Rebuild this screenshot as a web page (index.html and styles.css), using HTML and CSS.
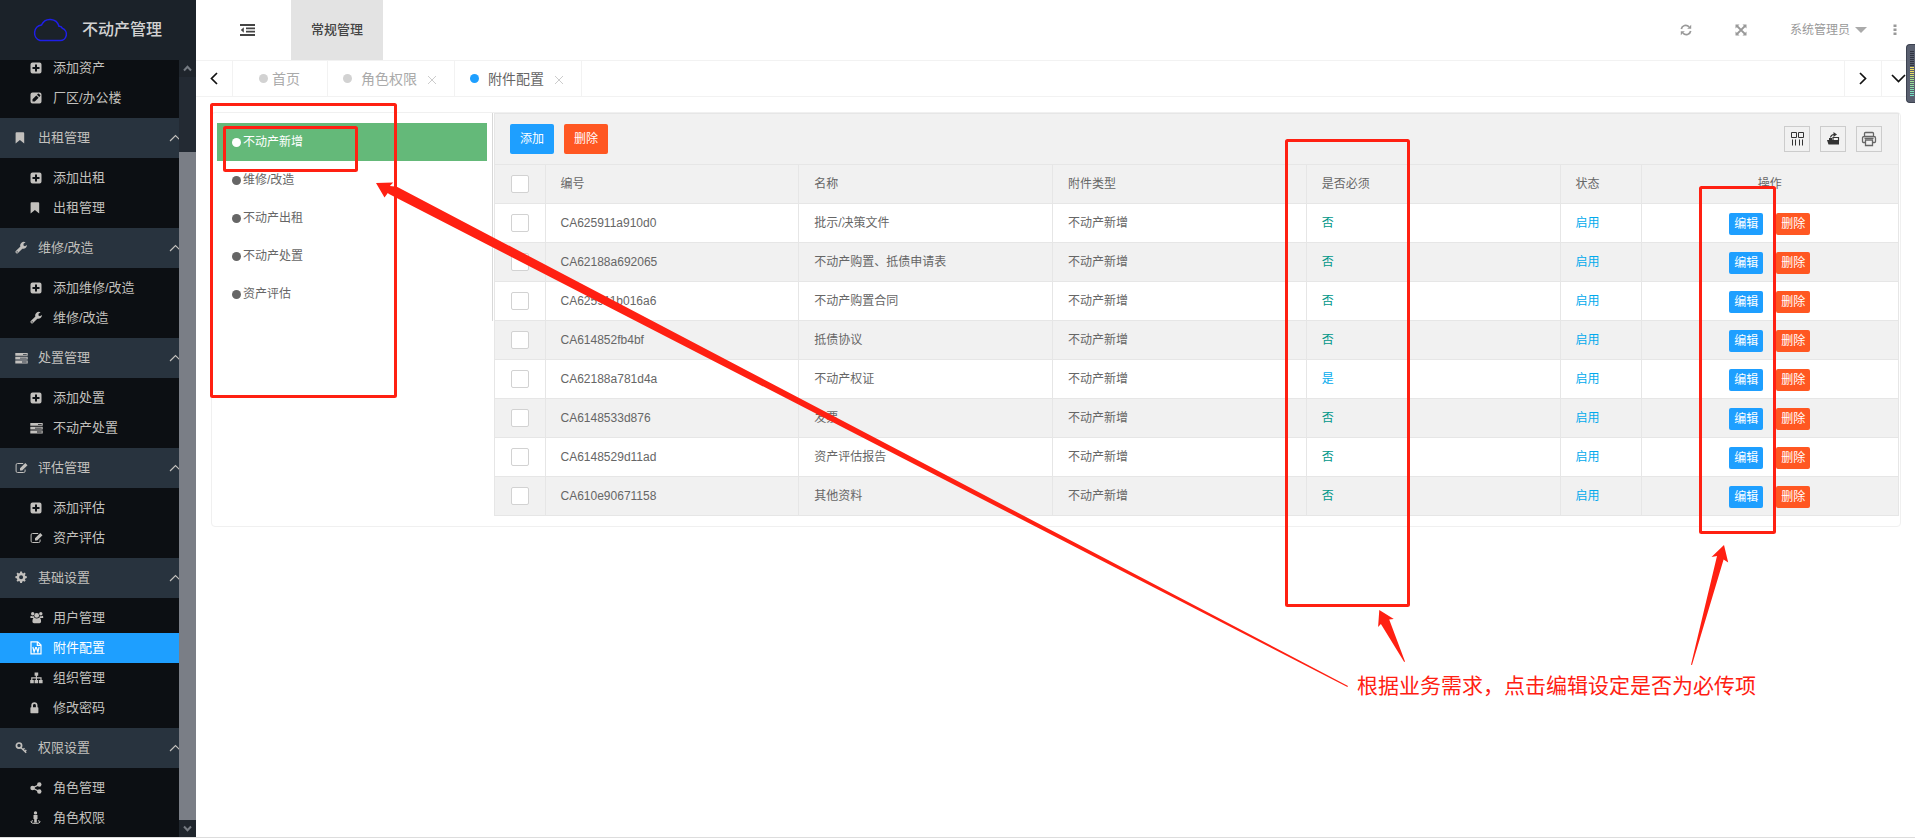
FILE: index.html
```html
<!DOCTYPE html>
<html lang="zh-CN">
<head>
<meta charset="utf-8">
<title>不动产管理</title>
<link rel="stylesheet" href="styles.css">
</head>
<body>
<svg class="sprite" aria-hidden="true">
  <symbol id="plus" viewBox="0 0 14 14"><path fill-rule="evenodd" d="M2.500 1.500h7a2 2 0 0 1 2 2v7a2 2 0 0 1-2 2h-7a2 2 0 0 1-2-2v-7a2 2 0 0 1 2-2zM5 3.500V6H2.500v2H5v2.500h2V8h2.500V6H7V3.500z"/></symbol>
  <symbol id="pencil" viewBox="0 0 14 14"><path fill-rule="evenodd" d="M2.500 1.500h7a2 2 0 0 1 2 2v7a2 2 0 0 1-2 2h-7a2 2 0 0 1-2-2v-7a2 2 0 0 1 2-2zM2.500 8.200v2.300h2.300L8.600 6.700 6.300 4.400zM7 3.700 9.300 6l.9-.9a.7.7 0 0 0 0-1L8.900 2.800a.7.7 0 0 0-1 0z"/></symbol>
  <symbol id="bookmark" viewBox="0 0 14 14"><path d="M1.500 1.300h6.800q.9 0 .9.900v10.400L4.900 8.900.6 12.600V2.200q0-.9.900-.9z"/></symbol>
  <symbol id="wrench" viewBox="0 0 14 14"><path fill-rule="evenodd" d="M7.300 7.700 3 12.100a1.300 1.300 0 0 1-1.900 0l-.3-.4a1.300 1.300 0 0 1 0-1.800l4.600-4.300A3.600 3.600 0 0 1 10.600 1.300L8.500 2.700v1.700l1.400.8 2-1.200A3.600 3.600 0 0 1 7.300 7.700zM2.100 10.300a.6.6 0 1 0 .1 1.200.6.6 0 0 0-.1-1.200z"/></symbol>
  <symbol id="server" viewBox="0 0 14 14"><path fill-rule="evenodd" d="M.3 2h12.400v2.800H.3zM8 3v.8h3.700V3zM.3 5.800h12.400v2.800H.3zM5 6.800v.8h6.700v-.8zM.3 9.600h12.400v2.800H.3zM7 10.600v.8h4.700v-.8z"/></symbol>
  <symbol id="edit" viewBox="0 0 14 14"><path d="M8.200 2.500H2.500a1.400 1.400 0 0 0-1.400 1.400v6.200a1.400 1.400 0 0 0 1.400 1.400h6.200a1.400 1.400 0 0 0 1.400-1.400V8.500" fill="none" stroke="currentColor"/><path d="M5 7.300 10.300 2 12.500 4.200 7.200 9.500H5z"/></symbol>
  <symbol id="gear" viewBox="0 0 14 14"><path fill-rule="evenodd" d="m4.900 2 .3-1.400h1.800L7.300 2l1 .4 1.200-.8 1.200 1.200-.8 1.300.4 1 1.500.2v1.800l-1.500.3-.4 1 .8 1.200-1.200 1.200-1.200-.8-1 .4L7 11.900H5.200l-.3-1.500-1-.4-1.200.8L1.500 9.600l.8-1.200-.4-1L.4 7.100V5.300l1.500-.2.4-1-.8-1.300 1.200-1.200 1.200.8zM6.100 4.200a2 2 0 1 0 0 4 2 2 0 0 0 0-4z"/></symbol>
  <symbol id="users" viewBox="0 0 14 14"><circle cx="2.700" cy="2.800" r="1.700"/><circle cx="10.800" cy="2.800" r="1.700"/><circle cx="6.700" cy="4.400" r="2.400"/><path d="M.4 7V5.800Q.4 4.700 1.500 4.900q1.200.6 2.200.1.200 1.200 1 2zM13.200 7V5.800q0-1.100-1.100-.9-1.200.6-2.200.1-.2 1.200-1 2zM2.400 10.400q0-3.400 2-3.700 2.300 1.600 4.700 0 2 .3 2 3.700 0 1.800-1.600 1.800H4q-1.600 0-1.600-1.800z"/></symbol>
  <symbol id="word" viewBox="0 0 14 14"><path d="M1 .8h6.700l3.300 3.300v8.700H1zM7.300.8v3.600H11" fill="none" stroke="currentColor" stroke-width="1.200"/><path d="m2.900 6 1.200 5 1.600-4.400h.7L7.900 11l1.200-5" fill="none" stroke="currentColor" stroke-width="1.200"/></symbol>
  <symbol id="sitemap" viewBox="0 0 14 14"><path d="M4.600 1.500h3.600v3.300H7v1.500h4.600V9h1v3.200H9V9h1.400V7.400H7V9h1.200v3.200H4.600V9h1.200V7.400H2.400V9h1.400v3.200H.2V9h1V6.300h4.600V4.800H4.600z"/></symbol>
  <symbol id="lock" viewBox="0 0 14 14"><path fill-rule="evenodd" d="M1.300 6.300V4.400a3.100 3.100 0 0 1 6.200 0v1.900h.3q.6 0 .6.700v4.600q0 .7-.6.700H1q-.6 0-.6-.7V7q0-.7.6-.7zM3 6.300h2.900V4.400a1.450 1.450 0 0 0-2.900 0z"/></symbol>
  <symbol id="key" viewBox="0 0 14 14"><circle cx="4" cy="4.600" r="2.600" fill="none" stroke="currentColor" stroke-width="1.700"/><path d="m5.800 6.400 5.400 5.400M8 8.700l1.500-1.500M9.800 10.500 11.300 9" fill="none" stroke="currentColor" stroke-width="1.400"/></symbol>
  <symbol id="share" viewBox="0 0 14 14"><circle cx="2.600" cy="7" r="2.300"/><circle cx="9.300" cy="3.500" r="2.200"/><circle cx="9.300" cy="10.500" r="2.200"/><path d="M9.300 3.500 2.600 7l6.700 3.500" fill="none" stroke="currentColor" stroke-width="1.400"/></symbol>
  <symbol id="person" viewBox="0 0 14 14"><circle cx="5.500" cy="1.900" r="1.700"/><path d="M3.500 4h4v4h-.7v3.700H4.200V8h-.7z"/><path d="M3 9.700Q.8 10 .8 11q.6 1.500 4.700 1.500t4.700-1.500q0-1-2.200-1.300" fill="none" stroke="currentColor"/></symbol>
  <symbol id="up" viewBox="0 0 14 8"><path d="m1 7 5.500-5.500L12 7" fill="none" stroke="currentColor" stroke-width="1.200"/></symbol>
  <symbol id="cross" viewBox="0 0 10 10"><path d="m1 1 8 8M9 1 1 9" fill="none" stroke="currentColor"/></symbol>
</svg>

<div class="app">
  <aside class="sidebar">
    <div class="brand">
      <svg class="cloud" viewBox="0 0 37 25"><path d="M9 22.500h20a6.300 6.300 0 0 0 2.300-12.200Q30.500 8 28 8.300A9.300 9.300 0 0 0 10.500 7 8 8 0 0 0 9 22.500z" fill="none" stroke="#1f1fe8" stroke-width="1.500"/></svg>
      <h1>不动产管理</h1>
    </div>
    <div class="side-body">
      <nav class="menu">
        <ul class="sub sub-scrolled">
          <li><a href="#"><svg><use href="#plus"/></svg>添加资产</a></li>
          <li><a href="#"><svg><use href="#pencil"/></svg>厂区/办公楼</a></li>
        </ul>
        <button class="group"><svg><use href="#bookmark"/></svg>出租管理<svg class="chev"><use href="#up"/></svg></button>
        <ul class="sub">
          <li><a href="#"><svg><use href="#plus"/></svg>添加出租</a></li>
          <li><a href="#"><svg><use href="#bookmark"/></svg>出租管理</a></li>
        </ul>
        <button class="group"><svg><use href="#wrench"/></svg>维修/改造<svg class="chev"><use href="#up"/></svg></button>
        <ul class="sub">
          <li><a href="#"><svg><use href="#plus"/></svg>添加维修/改造</a></li>
          <li><a href="#"><svg><use href="#wrench"/></svg>维修/改造</a></li>
        </ul>
        <button class="group"><svg><use href="#server"/></svg>处置管理<svg class="chev"><use href="#up"/></svg></button>
        <ul class="sub">
          <li><a href="#"><svg><use href="#plus"/></svg>添加处置</a></li>
          <li><a href="#"><svg><use href="#server"/></svg>不动产处置</a></li>
        </ul>
        <button class="group"><svg><use href="#edit"/></svg>评估管理<svg class="chev"><use href="#up"/></svg></button>
        <ul class="sub">
          <li><a href="#"><svg><use href="#plus"/></svg>添加评估</a></li>
          <li><a href="#"><svg><use href="#edit"/></svg>资产评估</a></li>
        </ul>
        <button class="group"><svg><use href="#gear"/></svg>基础设置<svg class="chev"><use href="#up"/></svg></button>
        <ul class="sub">
          <li><a href="#"><svg><use href="#users"/></svg>用户管理</a></li>
          <li><a href="#" class="active"><svg><use href="#word"/></svg>附件配置</a></li>
          <li><a href="#"><svg><use href="#sitemap"/></svg>组织管理</a></li>
          <li><a href="#"><svg><use href="#lock"/></svg>修改密码</a></li>
        </ul>
        <button class="group"><svg><use href="#key"/></svg>权限设置<svg class="chev"><use href="#up"/></svg></button>
        <ul class="sub">
          <li><a href="#"><svg><use href="#share"/></svg>角色管理</a></li>
          <li><a href="#"><svg><use href="#person"/></svg>角色权限</a></li>
        </ul>
      </nav>
      <div class="scroll">
        <span class="scroll-btn"><svg viewBox="0 0 9 7"><path d="m1 5.500 3.500-3.700L8 5.500" /></svg></span>
        <span class="scroll-track"></span>
        <span class="scroll-thumb"></span>
        <span class="scroll-btn"><svg viewBox="0 0 9 7"><path d="m1 1.500 3.500 3.700L8 1.500" /></svg></span>
      </div>
    </div>
  </aside>

  <div class="page">
    <header class="topbar">
      <button class="fold" aria-label="折叠菜单"><svg viewBox="0 0 15 12"><path d="M0 1h15M6 4.300h9M6 7.600h9M0 11h15" fill="none" stroke="currentColor" stroke-width="1.800"/><path d="M3.800 3.300v5.400L.8 6z"/></svg></button>
      <a href="#" class="module">常规管理</a>
      <div class="tools">
        <button aria-label="刷新"><svg viewBox="0 0 12 12"><path d="M1.300 5A4.500 4.500 0 0 1 9 2.800M10.700 7A4.500 4.500 0 0 1 3 9.200" fill="none" stroke="currentColor" stroke-width="1.700"/><path d="M11.200.8v4h-4zM.8 11.200v-4h4z"/></svg></button>
        <button aria-label="全屏"><svg viewBox="0 0 12 12"><path d="M.5.500h4L.5 4.500zM11.500.500v4l-4-4zM.5 11.500v-4l4 4zM11.500 11.500h-4l4-4z"/><path d="m2 2 8 8M10 2l-8 8" stroke="currentColor" stroke-width="1.800"/></svg></button>
        <button class="user">系统管理员<span class="caret"></span></button>
        <button class="more" aria-label="更多"><svg viewBox="0 0 4 12"><path d="M.5.500h3v2.500h-3zM.5 4.500h3V7h-3zM.5 8.500h3V11h-3z"/></svg></button>
      </div>
    </header>

    <div class="tabs">
      <button class="step" aria-label="向左"><svg viewBox="0 0 8 13"><path d="M7 1 1.500 6.500 7 12"/></svg></button>
      <a href="#" class="tab home"><i></i>首页</a>
      <a href="#" class="tab"><i></i>角色权限<svg><use href="#cross"/></svg></a>
      <a href="#" class="tab current"><i></i>附件配置<svg><use href="#cross"/></svg></a>
      <span class="fill"></span>
      <button class="step" aria-label="向右"><svg viewBox="0 0 8 13"><path d="M1 1l5.500 5.500L1 12"/></svg></button>
      <button class="step last" aria-label="展开"><svg class="wide" viewBox="0 0 15 9"><path d="m1 1 6.500 6.500L14 1"/></svg></button>
    </div>

    <main class="card">
      <ul class="types">
        <li><a href="#" class="on"><i></i>不动产新增</a></li>
        <li><a href="#"><i></i>维修/改造</a></li>
        <li><a href="#"><i></i>不动产出租</a></li>
        <li><a href="#"><i></i>不动产处置</a></li>
        <li><a href="#"><i></i>资产评估</a></li>
      </ul>
      <section class="grid">
        <div class="bar">
          <button class="btn blue">添加</button>
          <button class="btn red">删除</button>
          <div class="bar-tools">
            <button aria-label="筛选列"><svg viewBox="0 0 16 16"><path d="M2.500 1.500h5v5h-5zM9.500 1.500h5v5h-5zM3.500 8.500v6M6.500 8.500v6M10.500 8.500v6M13.500 8.500v6" fill="none" stroke="#333"/></svg></button>
            <button aria-label="导出"><svg viewBox="0 0 16 16"><path d="M2 9h12v4.500H3.500zM4 7h3v2H4z" fill="#333"/><path d="M5.500 6.500Q6 3.500 9 3.500M8 10V6.500h5.500V10" fill="none" stroke="#333" stroke-width="1.200"/><path d="M8.500 1v5L12 3.500z" fill="#333"/></svg></button>
            <button aria-label="打印"><svg viewBox="0 0 16 16"><path d="M3.500 5.500v-3q0-1 1-1h7q1 0 1 1v3M4 11.500H2.500q-1 0-1-1V7q0-1.500 1.500-1.500h10q1.500 0 1.500 1.500v3.500q0 1-1 1H12M4.500 9h7v5.500h-7zM3.500 7.300h9" fill="none" stroke="#666" stroke-width="1.300"/></svg></button>
          </div>
        </div>
        <table>
          <colgroup><col class="c-check"><col><col><col><col><col class="c-state"><col class="c-ops"></colgroup>
          <thead><tr><th><input type="checkbox" aria-label="全选"></th><th>编号</th><th>名称</th><th>附件类型</th><th>是否必须</th><th>状态</th><th class="ops">操作</th></tr></thead>
          <tbody>
            <tr><td><input type="checkbox" aria-label="选择"></td><td>CA625911a910d0</td><td>批示/决策文件</td><td>不动产新增</td><td class="no">否</td><td class="yes">启用</td><td class="ops"><div><button class="mini blue">编辑</button><button class="mini red">删除</button></div></td></tr>
            <tr><td><input type="checkbox" aria-label="选择"></td><td>CA62188a692065</td><td>不动产购置、抵债申请表</td><td>不动产新增</td><td class="no">否</td><td class="yes">启用</td><td class="ops"><div><button class="mini blue">编辑</button><button class="mini red">删除</button></div></td></tr>
            <tr><td><input type="checkbox" aria-label="选择"></td><td>CA625911b016a6</td><td>不动产购置合同</td><td>不动产新增</td><td class="no">否</td><td class="yes">启用</td><td class="ops"><div><button class="mini blue">编辑</button><button class="mini red">删除</button></div></td></tr>
            <tr><td><input type="checkbox" aria-label="选择"></td><td>CA614852fb4bf</td><td>抵债协议</td><td>不动产新增</td><td class="no">否</td><td class="yes">启用</td><td class="ops"><div><button class="mini blue">编辑</button><button class="mini red">删除</button></div></td></tr>
            <tr><td><input type="checkbox" aria-label="选择"></td><td>CA62188a781d4a</td><td>不动产权证</td><td>不动产新增</td><td class="yes">是</td><td class="yes">启用</td><td class="ops"><div><button class="mini blue">编辑</button><button class="mini red">删除</button></div></td></tr>
            <tr><td><input type="checkbox" aria-label="选择"></td><td>CA6148533d876</td><td>发票</td><td>不动产新增</td><td class="no">否</td><td class="yes">启用</td><td class="ops"><div><button class="mini blue">编辑</button><button class="mini red">删除</button></div></td></tr>
            <tr><td><input type="checkbox" aria-label="选择"></td><td>CA6148529d11ad</td><td>资产评估报告</td><td>不动产新增</td><td class="no">否</td><td class="yes">启用</td><td class="ops"><div><button class="mini blue">编辑</button><button class="mini red">删除</button></div></td></tr>
            <tr><td><input type="checkbox" aria-label="选择"></td><td>CA610e90671158</td><td>其他资料</td><td>不动产新增</td><td class="no">否</td><td class="yes">启用</td><td class="ops"><div><button class="mini blue">编辑</button><button class="mini red">删除</button></div></td></tr>
          </tbody>
        </table>
      </section>
    </main>
  </div>
</div>

<div class="meter"></div>

<svg class="marks" aria-hidden="true">
  <g class="frames">
    <rect x="211.500" y="104.500" width="184" height="292" rx="1"/>
    <rect x="224.500" y="127.500" width="132" height="43" rx="1"/>
    <rect x="1286.500" y="140.500" width="122" height="465" rx="1"/>
    <rect x="1700.500" y="187.500" width="74" height="345" rx="1"/>
  </g>
  <path d="M376 183l17.200-.6-3.300 3.600 7 .8L1348 686l-.6 1L389 194l-1.200-1-3.300 4.500zM1379.300 610l14.500 9-4.600.6 15.800 42-.8.400-23.300-38-2.800 3zM1724 545l4.200 17.500-4.600-3L1692 665l-1-.3L1717 556l-5.500 1z"/>
</svg>
<p class="note">根据业务需求，点击编辑设定是否为必传项</p>
</body>
</html>
```
FILE: styles.css
```css
* { box-sizing: border-box; }
body {
  margin: 0;
  font: 12px/20px "Liberation Sans", "Noto Sans CJK SC", sans-serif;
  color: #666;
  background: #fff;
}
button { font: inherit; color: inherit; background: none; border: 0; padding: 0; margin: 0; cursor: pointer; }
a { color: inherit; text-decoration: none; }
ul { list-style: none; margin: 0; padding: 0; }
svg { fill: currentColor; flex: none; }
.sprite { position: absolute; width: 0; height: 0; }

.app { display: flex; height: 100vh; border-bottom: 1px solid #ddd; overflow: hidden; }

/* sidebar */
.sidebar { width: 196px; flex: none; display: flex; flex-direction: column; background: #0c0f13; color: #c2c0bd; font-size: 13px; }
.brand { height: 60px; flex: none; display: flex; align-items: center; gap: 14px; padding-left: 31px; background: #1b2229; }
.brand h1 { margin: 0; font-size: 16px; font-weight: 500; color: #d2d2d2; }
.cloud { width: 37px; height: 25px; }
.side-body { flex: 1; display: flex; min-height: 0; }
.menu { flex: 1; min-width: 0; overflow: hidden; }
.sub { padding: 5px 0; }
.sub-scrolled { height: 58px; display: flex; flex-direction: column; justify-content: flex-end; overflow: hidden; }
.sub a { display: flex; align-items: center; gap: 9px; height: 30px; padding-left: 30px; }
.sub a.active { background: #1e9fff; color: #fff; }
.sub svg, .group svg { width: 14px; height: 14px; }
.group { display: flex; align-items: center; gap: 9px; width: 100%; height: 40px; padding-left: 15px; background: #28333e; overflow: hidden; text-align: left; }
.group .chev { width: 14px; height: 8px; margin-left: auto; margin-right: -4px; }
.scroll { width: 17px; display: flex; flex-direction: column; }
.scroll-btn { height: 17px; flex: none; display: flex; align-items: center; justify-content: center; background: #1f252c; }
.scroll-btn svg { width: 9px; height: 7px; fill: none; stroke: #767b82; stroke-width: 2; }
.scroll-track { flex: 75; background: #232a33; }
.scroll-thumb { flex: 668; background: #7a7e86; }

/* top bar */
.page { flex: 1; min-width: 0; }
.topbar { height: 60px; display: flex; align-items: center; }
.fold { width: 95px; height: 60px; display: flex; align-items: center; padding-left: 44px; color: #444; }
.fold svg { width: 15px; height: 12px; }
.module { height: 60px; line-height: 60px; padding: 0 20px; background: #e3e3e3; font-size: 13px; font-weight: 500; color: #444; }
.tools { margin-left: auto; display: flex; align-items: center; color: #999; padding-right: 18px; height: 60px; }
.tools button { display: flex; align-items: center; margin-right: 43px; }
.tools svg { width: 12px; height: 12px; }
.tools .user { gap: 5px; margin-right: 26px; }
.tools .more { margin-right: 0; }
.tools .more svg { width: 4px; }
.caret { border: 6px solid transparent; border-top-color: #aaa; border-bottom-width: 0; }

/* page tabs */
.tabs { height: 37px; display: flex; border: solid #f2f2f2; border-width: 1px 0; font-size: 14px; color: #aaa; }
.step { width: 37px; display: flex; align-items: center; justify-content: center; border-right: 1px solid #f2f2f2; }
.step svg { width: 8px; height: 13px; fill: none; stroke: #111; stroke-width: 1.700; }
.step .wide { width: 15px; height: 9px; }
.fill { flex: 1; border-right: 1px solid #f2f2f2; }
.step.last { width: 33px; border: 0; }
.tab { display: flex; align-items: center; padding: 0 17px 0 15px; border-right: 1px solid #f2f2f2; }
.tab i { width: 9px; height: 9px; margin-right: 9px; border-radius: 50%; background: #d2d2d2; }
.tab.home { padding: 0 27px 0 26px; }
.tab.home i { margin-right: 4px; }
.tab svg { width: 10px; height: 10px; margin: 2px 0 0 10px; color: #ccc; }
.tab.current { color: #666; }
.tab.current i { background: #1e9fff; }

/* content */
.card { margin: 15px 14px 0 15px; display: flex; align-items: flex-start; border: 1px solid #f0f0f0; border-radius: 4px; padding-bottom: 10px; }
.types { width: 281px; height: 208px; flex: none; padding: 10px 5px 0; border-right: 1px solid #d8d8d8; }
.types a { display: flex; align-items: center; gap: 2px; height: 38px; padding-left: 15px; }
.types i { width: 9px; height: 9px; border-radius: 50%; background: currentColor; }
.types .on { background: #64b979; color: #fff; }
.grid { flex: 1; min-width: 0; margin: 0 1px; border: 1px solid #e6e6e6; border-bottom: 0; }
.bar { display: flex; align-items: center; gap: 10px; height: 50px; padding: 0 16px 0 15px; background: #f1f1f1; }
.btn { width: 44px; height: 30px; border-radius: 2px; color: #fff; }
.blue { background: #1e9fff; }
.red { background: #ff5722; }
.bar-tools { display: flex; gap: 10px; margin-left: auto; }
.bar-tools button { width: 26px; height: 26px; display: flex; align-items: center; justify-content: center; border: 1px solid #ccc; }
.bar-tools svg { width: 16px; height: 16px; }
table { width: 100%; border-collapse: collapse; table-layout: fixed; }
.c-check { width: 50px; }
.c-state { width: 81px; }
.c-ops { width: 257px; }
th, td { height: 39px; padding: 0 15px; border: 1px solid #e6e6e6; text-align: left; font-weight: 400; }
th:first-child, td:first-child { border-left: 0; }
th:last-child, td:last-child { border-right: 0; }
thead tr, tbody tr:nth-child(even) { background: #f1f1f1; }
input[type="checkbox"] { appearance: none; display: block; width: 18px; height: 18px; margin: 0 auto 0 1px; border: 1px solid #d2d2d2; border-radius: 2px; background: #fff; }
.no { color: #009688; }
.yes { color: #01aaed; }
th.ops { text-align: center; }
.ops div { display: flex; justify-content: center; gap: 13px; padding-top: 2px; }
.mini { width: 34px; height: 22px; border-radius: 2px; color: #fff; line-height: 22px; }

/* overlays */
.meter {
  position: absolute; right: 0; top: 44px; width: 9px; height: 59px;
  border: solid #3c4250; border-width: 1px 0 1px 1px; border-radius: 4px 0 0 4px; background: #5a6070;
}
.meter::before {
  content: ""; position: absolute; left: 3px; right: 1px; top: 6px; bottom: 6px;
  background:
    repeating-linear-gradient(transparent 0 1px, #5a6070 1px 2px),
    linear-gradient(#2f3440 0 34%, #f0e060 34% 48%, #a8e088 62%, #70e0c8);
}
.marks { position: absolute; left: 0; top: 0; width: 100%; height: 100%; pointer-events: none; fill: #ff2012; }
.frames { fill: none; stroke: #ff2012; stroke-width: 3; }
.note { position: absolute; left: 1357px; top: 671px; margin: 0; font-size: 21px; line-height: 30px; color: #ff2012; white-space: nowrap; }
```
